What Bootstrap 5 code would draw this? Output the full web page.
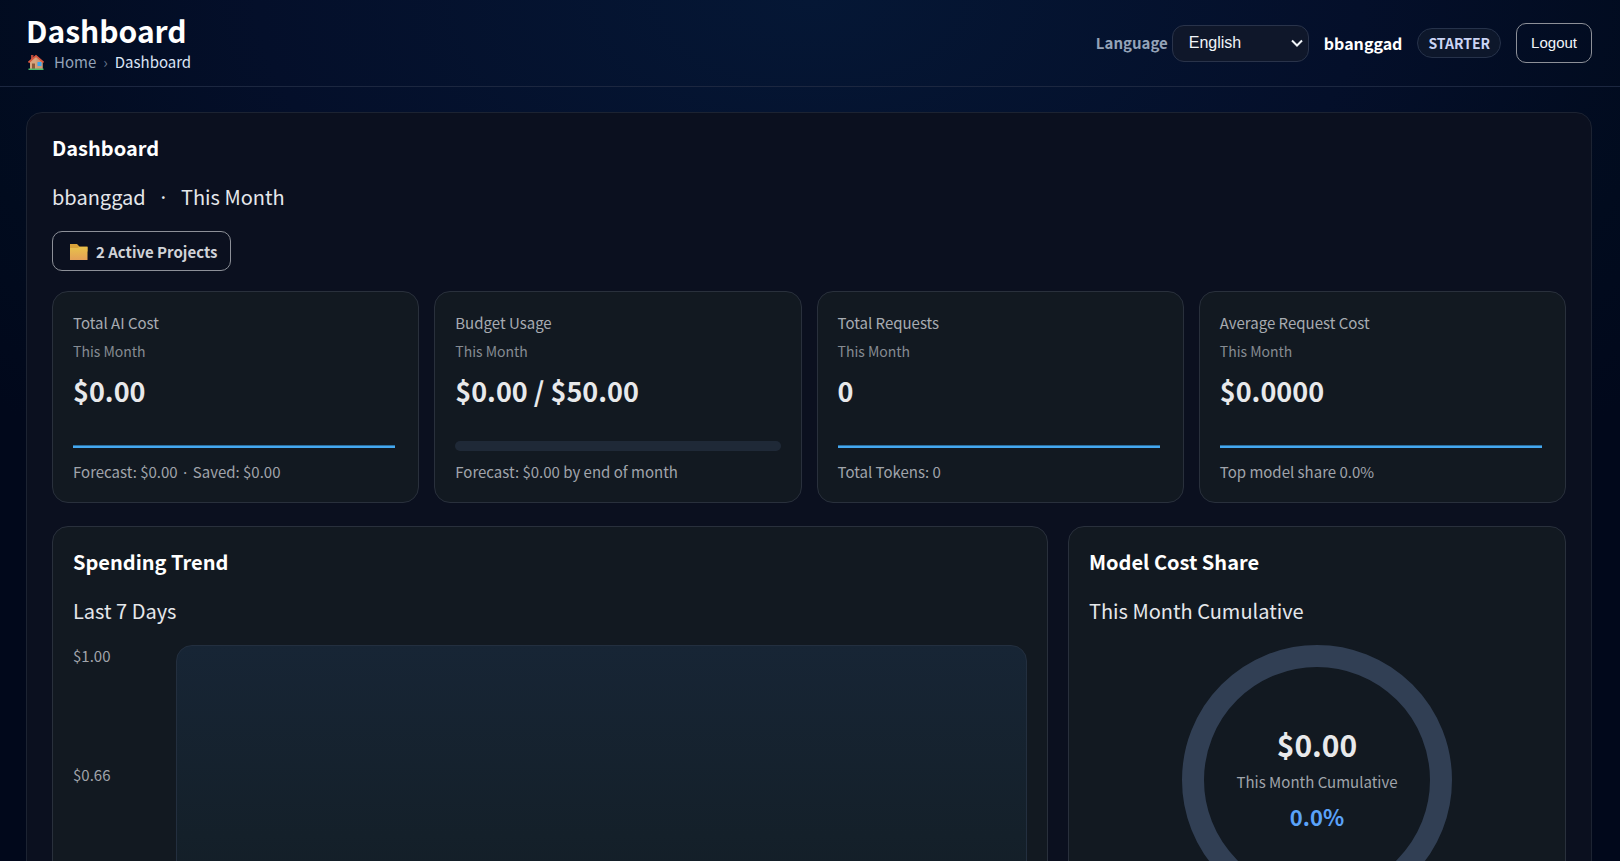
<!DOCTYPE html>
<html lang="en" data-bs-theme="dark">
<head>
<meta charset="utf-8">
<meta name="viewport" content="width=device-width, initial-scale=1">
<title>Dashboard</title>
<link href="https://cdn.jsdelivr.net/npm/bootstrap@5.3.0/dist/css/bootstrap.min.css" rel="stylesheet">
<style>
  body {
    font-family: "Noto Sans CJK KR", "Noto Sans", sans-serif;
    font-size: 15px;
    line-height: 24px;
    color: #e5e7eb;
    min-height: 100vh;
    background: radial-gradient(ellipse 1100px 600px at 50% 0, #051735 0%, #040f2a 50%, #010b1e 80%, #01081b 100%) #01081b;
  }
  .topbar { border-bottom: 1px solid #1c2740; padding: 11px 28px 11px 26px; }
  .page-title { font-size: 30px; line-height: 38px; font-weight: 700; color: #fff; }
  .crumbs { line-height: 26px; }
  .crumbs a { color: #94a3b8; text-decoration: none; }
  .crumbs .sep { color: #64748b; padding: 0 7px; }
  .crumbs .current { color: #dbe4f5; }
  .account { gap: 15px; }
  .lang-label { font-weight: 700; color: #94a3b8; }
  .lang-select {
    font: 16px/20px "Liberation Sans", sans-serif;
    width: 137px; height: 37px; padding: 0 32px 0 16px;
    color: #f1f5f9; background-color: #0f172a; border: 1px solid #29334a; border-radius: 12px;
    background-position: right 4px center; background-size: 14px 12px;
    background-image: url("data:image/svg+xml,%3csvg xmlns='http://www.w3.org/2000/svg' viewBox='0 0 14 12'%3e%3cpath fill='none' stroke='%23f1f5f9' stroke-width='2' d='M2 3.5l5 5 5-5'/%3e%3c/svg%3e");
  }
  .user { font-size: 16px; font-weight: 700; color: #fff; }
  .plan { font-size: 14px; line-height: 20px; font-weight: 700; color: #cbd5f5; background: #0d172b; border: 1px solid #26324a; border-radius: 15px; padding: 4px 10px; }
  .btn-line { border: 1px solid #8d9098; border-radius: 10px; height: 40px; color: #f1f5f9; padding: 0 14px; }
  .btn-logout { font: 15px/20px "Liberation Sans", sans-serif; }
  .btn-projects { font-size: 15px; line-height: 24px; font-weight: 700; color: #d1d3d8; padding: 1px 13px 0 17px; }
  .page-body { padding: 25px 28px 0 26px; }
  .panel { background: #0b101f; border: 1px solid #1c2332; border-radius: 16px; padding: 21px 25px; }
  .tile { background: #121921; border: 1px solid #29303c; border-radius: 16px; padding: 19px 20px 18px; }
  .tile-row { --bs-gutter-x: 15px; }
  .section-title { font-size: 20px; line-height: 28px; font-weight: 700; color: #fff; }
  .section-sub { font-size: 20px; line-height: 30px; color: #e5e7eb; margin: 20px 0 19px; }
  .dot { padding: 0 12px; }
  .metric-name { color: #a7abb1; }
  .metric-period { font-size: 14px; color: #868b92; }
  .metric-value { font-size: 27px; line-height: 40px; font-weight: 700; color: #e8e9eb; }
  .metric-note { color: #a0a4ab; }
  .meter { height: 10px; margin: 30px 0 9px; }
  .meter-line { height: 3px; background: linear-gradient(#2b6f9f 1px, #45a8f0 1px); margin-right: 3px; }
  .meter-track { height: 10px; border-radius: 5px; background: #1f2937; }
  .charts { display: grid; grid-template-columns: 2fr 1fr; gap: 20px; margin-top: 23px; }
  .chart-tile { padding: 21px 20px; }
  .chart-labels { width: 103px; line-height: 22px; color: #a0a4ab; gap: 97px; }
  .plot { border: 1px solid #232f3f; border-radius: 16px; min-height: 380px; background: linear-gradient(#172535, #14202a 50%, #121921); }
  .donut { width: 270px; height: 270px; border-radius: 50%; border: 22px solid #313f54; }
  .donut-value { font-size: 30px; line-height: 40px; font-weight: 700; color: #e8e9eb; margin-bottom: 6px; }
  .donut-pct { font-size: 22px; line-height: 36px; font-weight: 700; color: #5aa2f9; margin: 4px 0 2px; }
</style>
</head>
<body>
<header class="topbar d-flex align-items-center justify-content-between">
  <div>
    <h1 class="page-title mb-0">Dashboard</h1>
    <nav class="crumbs d-flex align-items-center" aria-label="breadcrumb">
      <svg class="me-2" width="20" height="16" viewBox="0 0 20 16" aria-hidden="true">
        <path d="M5 1h2.500v5H5z" fill="#b5483a"/>
        <path d="M4 7.500L10 2.500l6.500 5V15H4z" fill="#d8a57e"/>
        <path d="M10.500 3l6 5v7h-6z" fill="#cf9a76"/>
        <path d="M2.500 8.500L10 1.800l7.500 6.700" fill="none" stroke="#d9583f" stroke-width="1.700"/>
        <path d="M6 9.500h3V15H6z" fill="#8b5a3c"/>
        <path d="M11.500 8h4v4h-4z" fill="#3ea6ee"/>
        <path d="M2.500 14.500h15V16h-15z" fill="#4fb96a"/>
      </svg>
      <a href="#">Home</a><span class="sep">›</span><span class="current">Dashboard</span>
    </nav>
  </div>
  <div class="account d-flex align-items-center">
    <div class="d-flex align-items-center gap-1">
      <label class="lang-label" for="language">Language</label>
      <select class="form-select lang-select" id="language"><option>English</option></select>
    </div>
    <span class="user">bbanggad</span>
    <span class="plan">STARTER</span>
    <button type="button" class="btn btn-line btn-logout">Logout</button>
  </div>
</header>
<main class="page-body">
  <section class="panel">
    <h2 class="section-title mb-0">Dashboard</h2>
    <p class="section-sub">bbanggad<span class="dot">·</span>This Month</p>
    <button type="button" class="btn btn-line btn-projects d-inline-flex align-items-center">
      <svg width="18" height="18" viewBox="0 0 18 18" aria-hidden="true">
        <defs><linearGradient id="folder" x2="0" y2="1"><stop stop-color="#e8c14a"/><stop offset="1" stop-color="#e3a057"/></linearGradient></defs>
        <path d="M0 1h7l2.500 2.500H17.500v5H0z" fill="#d9a23a"/><path d="M0 5h7.500L9.500 4h8v13H0z" fill="url(#folder)"/>
      </svg>
      <span class="ps-2">2 Active Projects</span>
    </button>
    <div class="row row-cols-4 tile-row mt-3 pt-1">
      <div class="col"><article class="tile">
        <div class="metric-name">Total AI Cost</div><div class="metric-period mt-1">This Month</div>
        <div class="metric-value mt-2">$0.00</div>
        <div class="meter d-flex align-items-center"><div class="meter-line flex-fill"></div></div>
        <div class="metric-note">Forecast: $0.00 · Saved: $0.00</div>
      </article></div>
      <div class="col"><article class="tile">
        <div class="metric-name">Budget Usage</div><div class="metric-period mt-1">This Month</div>
        <div class="metric-value mt-2">$0.00 / $50.00</div>
        <div class="meter d-flex align-items-center"><div class="meter-track flex-fill"></div></div>
        <div class="metric-note">Forecast: $0.00 by end of month</div>
      </article></div>
      <div class="col"><article class="tile">
        <div class="metric-name">Total Requests</div><div class="metric-period mt-1">This Month</div>
        <div class="metric-value mt-2">0</div>
        <div class="meter d-flex align-items-center"><div class="meter-line flex-fill"></div></div>
        <div class="metric-note">Total Tokens: 0</div>
      </article></div>
      <div class="col"><article class="tile">
        <div class="metric-name">Average Request Cost</div><div class="metric-period mt-1">This Month</div>
        <div class="metric-value mt-2">$0.0000</div>
        <div class="meter d-flex align-items-center"><div class="meter-line flex-fill"></div></div>
        <div class="metric-note">Top model share 0.0%</div>
      </article></div>
    </div>
    <div class="charts">
      <article class="tile chart-tile">
        <h2 class="section-title mb-0">Spending Trend</h2>
        <p class="section-sub">Last 7 Days</p>
        <div class="d-flex">
          <div class="chart-labels d-flex flex-column"><span>$1.00</span><span>$0.66</span></div>
          <div class="plot flex-fill"></div>
        </div>
      </article>
      <article class="tile chart-tile">
        <h2 class="section-title mb-0">Model Cost Share</h2>
        <p class="section-sub">This Month Cumulative</p>
        <div class="donut mx-auto d-flex flex-column align-items-center justify-content-center">
          <div class="donut-value">$0.00</div><div class="metric-note">This Month Cumulative</div><div class="donut-pct">0.0%</div>
        </div>
      </article>
    </div>
  </section>
</main>
<script src="https://cdn.jsdelivr.net/npm/bootstrap@5.3.0/dist/js/bootstrap.bundle.min.js"></script>
</body>
</html>
